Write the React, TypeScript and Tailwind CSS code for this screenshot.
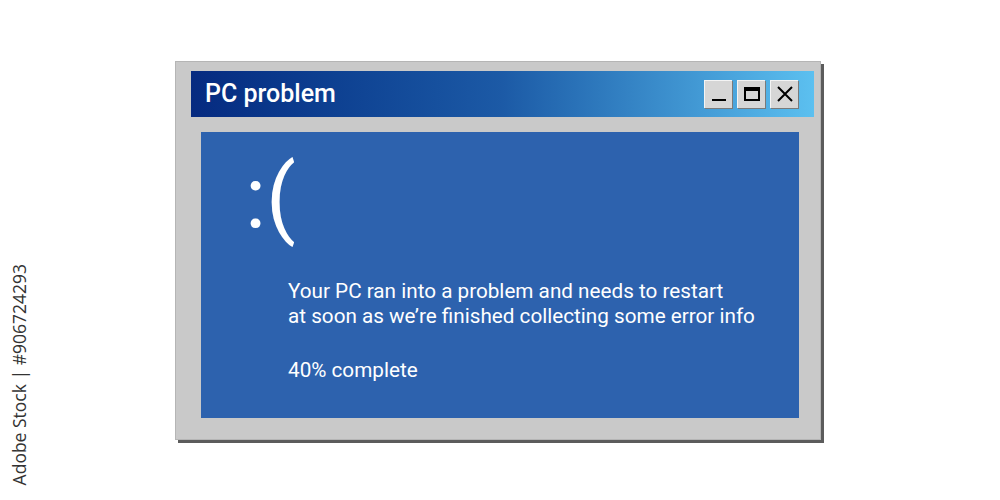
import React from 'react';

const WinButton: React.FC<{ children: React.ReactNode }> = ({ children }) => (
  <div className="w-[28px] h-[28px] bg-[#d6d6d6] border-t border-l border-t-[#f4f4f4] border-l-[#f4f4f4] shadow-[1px_1px_0_#7a7a7a] flex items-center justify-center">
    {children}
  </div>
);

const App: React.FC = () => {
  return (
    <div className="relative w-[1000px] h-[500px] bg-white flex items-center justify-center font-['Roboto',sans-serif]">
      {/* stock label on the left edge */}
      <div className="absolute left-[11px] bottom-[15px] [writing-mode:vertical-rl] rotate-180 text-[17.5px] text-[#333333] font-['Open_Sans',sans-serif] leading-none">
        Adobe Stock | #906724293
      </div>

      <div className="mr-[4px] w-[646px] h-[379px] bg-[#c9c9c9] border border-[#b5b5b5] shadow-[3px_3px_0_#5c5c5c] pl-[15px] pr-[6px] pt-[9px] flex flex-col">
        <div className="h-[46px] bg-gradient-to-r from-[#062a80] via-[#1c5aa6] to-[#5cc0f0] flex items-center justify-between pl-[14px] pr-[16px]">
          <span className="text-white text-[25px] font-medium leading-none">PC problem</span>
          <div className="flex gap-[5px]">
            <WinButton>
              <span className="block w-[14px] h-[2px] bg-black mt-[12px]" />
            </WinButton>
            <WinButton>
              <span className="block w-[16px] h-[14px] border-2 border-t-[4px] border-black" />
            </WinButton>
            <WinButton>
              <svg width="18" height="18" viewBox="0 0 18 18">
                <path d="M2 2 L16 16 M16 2 L2 16" stroke="black" strokeWidth="2" />
              </svg>
            </WinButton>
          </div>
        </div>

        <div className="mt-[15px] ml-[10px] mr-[15px] h-[286px] bg-[#2d62ae] relative text-white">
          <div className="pl-[44px] pt-[22px] text-[87px] leading-none h-[120px]">:(</div>
          <div className="pl-[87px] pt-[27px] text-[20.7px] leading-[25px]">
            <p>Your PC ran into a problem and needs to restart</p>
            <p>at soon as we’re finished collecting some error info</p>
            <p className="mt-[29px]">40% complete</p>
          </div>
        </div>
      </div>
    </div>
  );
};

export default App;
